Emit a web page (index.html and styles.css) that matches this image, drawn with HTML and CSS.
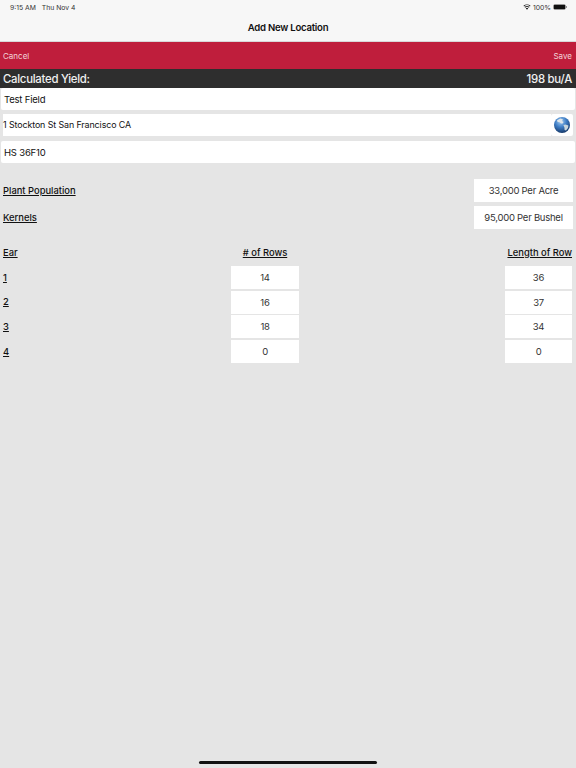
FILE: index.html
```html
<!DOCTYPE html>
<html lang="en">

<head>
  <meta charset="UTF-8">
  <meta name="viewport" content="width=device-width, initial-scale=1.0">
  <title>Add New Location</title>
  <link rel="stylesheet" href="styles.css">
</head>

<body>
  <div class="page">
    <header class="top">
      <div class="status">
        <span class="status-time">9:15 AM</span>
        <span>Thu Nov 4</span>
        <span class="status-right">
          <svg class="wifi" width="8" height="6" viewBox="0 0 10 8">
            <path d="M5 7.6 3.4 5.8a2.3 2.3 0 0 1 3.2 0z" fill="#111"/>
            <path d="M2.6 4.9a3.5 3.5 0 0 1 4.8 0l.8-.9a4.7 4.7 0 0 0-6.4 0z" fill="#111"/>
            <path d="M1.1 3.3a5.7 5.7 0 0 1 7.8 0l.8-.9a6.9 6.9 0 0 0-9.4 0z" fill="#111"/>
          </svg>
          <span>100%</span>
          <span class="battery"><span class="battery-fill"></span></span>
          <span class="battery-nub"></span>
        </span>
      </div>
      <h1 class="title">Add New Location</h1>
    </header>

    <div class="action-bar">
      <span>Cancel</span>
      <span>Save</span>
    </div>

    <div class="yield-bar">
      <span>Calculated Yield:</span>
      <span>198 bu/A</span>
    </div>

    <div class="field">Test Field</div>
    <div class="address-row">
      <div class="address">1 Stockton St San Francisco CA</div>
      <div class="globe-btn">
        <svg width="16" height="16" viewBox="0 0 16 16">
          <defs>
            <radialGradient id="sea" cx="0.42" cy="0.28" r="0.8">
              <stop offset="0" stop-color="#a4cdf2"/>
              <stop offset="0.45" stop-color="#3d7cc4"/>
              <stop offset="1" stop-color="#0e2c58"/>
            </radialGradient>
          </defs>
          <circle cx="8" cy="8" r="8" fill="url(#sea)"/>
          <path d="M3 3.2 6.5 1.6 9 2.4 8 4 9.6 5 8.6 6.6 7 6.4 5.6 5.2 3.6 5z" fill="#dfe6ea"/>
          <path d="M9.4 8 11.6 7.4 14.4 8.6 14 11 12 13.4 10.6 13 10.4 10.6z" fill="#c9d6dc"/>
        </svg>
      </div>
    </div>
    <div class="field">HS 36F10</div>

    <div class="stat-row stat-first">
      <span class="label">Plant Population</span>
      <div class="box stat-box">33,000 Per Acre</div>
    </div>
    <div class="stat-row">
      <span class="label">Kernels</span>
      <div class="box stat-box">95,000 Per Bushel</div>
    </div>

    <div class="ear-grid">
      <span class="label">Ear</span>
      <span class="label ear-center">#&nbsp;of Rows</span>
      <span class="label ear-end">Length of Row</span>

      <span class="label">1</span>
      <div class="box ear-center">14</div>
      <div class="box ear-end">36</div>

      <span class="label">2</span>
      <div class="box ear-center">16</div>
      <div class="box ear-end">37</div>

      <span class="label">3</span>
      <div class="box ear-center">18</div>
      <div class="box ear-end">34</div>

      <span class="label">4</span>
      <div class="box ear-center">0</div>
      <div class="box ear-end">0</div>
    </div>

    <div class="home-bar"></div>
  </div>
</body>

</html>
```

FILE: styles.css
```css
* {
  box-sizing: border-box;
}

html,
body {
  margin: 0;
  height: 100%;
}

body {
  background-color: #e5e5e5;
  color: #111111;
  font-family: Inter, "Liberation Sans", sans-serif;
  font-size: 9.5px;
}

.page {
  height: 768px;
  overflow: hidden;
  position: relative;
}

.top {
  background-color: #f7f7f7;
  border-bottom: 1px solid #d8d8d8;
  height: 42px;
}

.status {
  align-items: center;
  color: #333333;
  display: flex;
  font-size: 6.8px;
  gap: 6px;
  height: 14px;
  padding: 0 9px 0 10px;
}

.status-right {
  align-items: center;
  display: flex;
  gap: 2px;
  margin-left: auto;
}

.battery {
  border: 1px solid #999999;
  border-radius: 2px;
  display: block;
  height: 6px;
  width: 13px;
}

.battery-fill {
  background-color: #111111;
  display: block;
  height: 100%;
}

.battery-nub {
  background-color: #999999;
  height: 2px;
  margin-left: -2px;
  width: 1px;
}

.title {
  font-size: 9.6px;
  font-weight: 600;
  letter-spacing: -0.25px;
  line-height: 14px;
  margin: 7px 0 0;
  text-align: center;
}

.action-bar {
  align-items: center;
  background-color: #bf1e3c;
  color: #f3d5da;
  display: flex;
  font-size: 8px;
  height: 27px;
  justify-content: space-between;
  padding: 0 4px 0 3px;
}

.yield-bar {
  align-items: center;
  background-color: #2e2e2e;
  color: #f0f0f0;
  display: flex;
  font-size: 11.4px;
  font-weight: 500;
  height: 19px;
  justify-content: space-between;
  letter-spacing: -0.28px;
  padding: 0 4px 0 3px;
}

.field {
  background-color: #ffffff;
  border-radius: 2px;
  height: 22px;
  letter-spacing: -0.2px;
  line-height: 23px;
  margin: 0 1px;
  padding: 0 3px;
}

.address-row {
  display: flex;
  height: 22px;
  margin: 4px 3px 5px;
}

.address {
  background-color: #ffffff;
  flex: 1;
  font-size: 8.9px;
  letter-spacing: -0.1px;
  line-height: 22px;
}

.globe-btn {
  align-items: center;
  background-color: #ffffff;
  border-radius: 2px;
  display: flex;
  justify-content: center;
  width: 22px;
}

.stat-row {
  align-items: center;
  display: flex;
  height: 23px;
  justify-content: space-between;
  margin: 4px 3px 0;
}

.stat-first {
  margin-top: 16px;
}

.label {
  font-size: 9.4px;
  font-weight: 500;
  text-decoration: underline;
}

.box {
  background-color: #ffffff;
  color: #333333;
  letter-spacing: -0.25px;
  line-height: 23px;
  text-align: center;
}

.stat-box {
  width: 99px;
}

.ear-grid {
  align-items: center;
  display: grid;
  grid-auto-rows: 22.8px;
  grid-template-columns: 1fr 68px 206px 67px;
  margin: 12px 4px 0 3px;
  row-gap: 2px;
}

.ear-grid > .ear-center {
  grid-column: 2;
  text-align: center;
}

.ear-grid > .ear-end {
  grid-column: 4;
}

.ear-grid > .label.ear-end {
  justify-self: end;
  white-space: nowrap;
}

.home-bar {
  background-color: #111111;
  border-radius: 2px;
  bottom: 4px;
  height: 3px;
  left: 199px;
  position: absolute;
  width: 178px;
}
```
